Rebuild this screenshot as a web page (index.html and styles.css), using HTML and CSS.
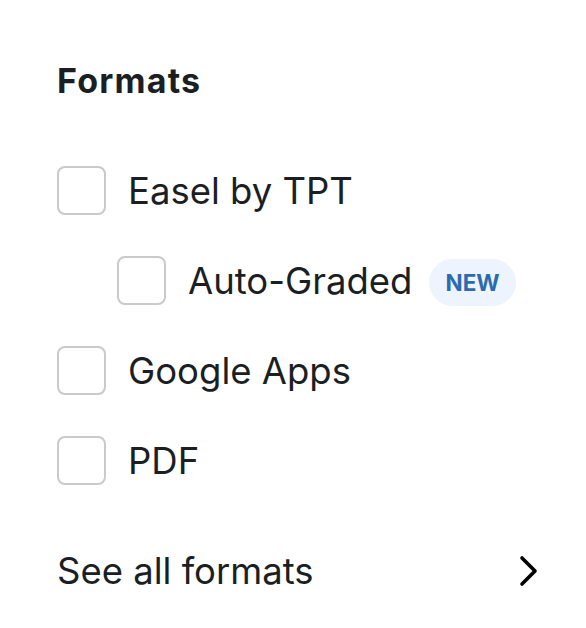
FILE: index.html
```html
<!DOCTYPE html>
<html>
<head>
    <meta charset="UTF-8" />
    <meta name="viewport" content="width=device-width, initial-scale=1.0" />
    <title>Formats</title>
    <link rel="stylesheet" href="styles.css">
</head>
<body>
    <div class="filter">
        <h2 class="filter-title">Formats</h2>
        <ul class="options">
            <li class="option">
                <span class="box"></span>
                <span class="label">Easel by TPT</span>
            </li>
            <li class="option sub">
                <span class="box"></span>
                <span class="label">Auto-Graded</span>
                <span class="badge">NEW</span>
            </li>
            <li class="option">
                <span class="box"></span>
                <span class="label">Google Apps</span>
            </li>
            <li class="option">
                <span class="box"></span>
                <span class="label">PDF</span>
            </li>
        </ul>
        <a href="javascript:;" class="see-all">
            <span>See all formats</span>
            <svg class="chevron" width="20" height="32" viewBox="0 0 20 32">
                <path d="M3 3 L16 16 L3 29" fill="none" stroke="#000" stroke-width="3.6" stroke-linecap="round" stroke-linejoin="round" />
            </svg>
        </a>
    </div>
</body>
</html>
```

FILE: styles.css
```css
body {
    margin: 0;
    background: #fff;
    font-family: "Inter", "Noto Sans", sans-serif;
    color: #1b1f24;
}

.filter {
    padding: 57px 47px 0 57px;
}

.filter-title {
    margin: 0;
    font-size: 34px;
    font-weight: 700;
    letter-spacing: 1.2px;
    line-height: 48px;
}

.options {
    list-style: none;
    margin: 0;
    padding: 0;
    margin-top: 61px;
    display: flex;
    flex-direction: column;
    gap: 41px;
}

.option {
    display: flex;
    align-items: center;
    height: 49px;
}

.option.sub {
    padding-left: 60px;
}

.box {
    box-sizing: border-box;
    width: 49px;
    height: 49px;
    border: 2px solid #cacaca;
    border-radius: 8px;
    flex-shrink: 0;
}

.label {
    margin-left: 22px;
    font-size: 36.5px;
}

.badge {
    margin-left: 17px;
    margin-top: 4px;
    padding: 0 16px;
    height: 47px;
    line-height: 47px;
    border-radius: 24px;
    background: #edf4fd;
    color: #2c6bb0;
    font-size: 22.5px;
    font-weight: 700;
}

.see-all {
    margin-top: 64px;
    display: flex;
    justify-content: space-between;
    align-items: center;
    color: #1b1f24;
    text-decoration: none;
    font-size: 36.5px;
}

.chevron {
    display: block;
}
```
